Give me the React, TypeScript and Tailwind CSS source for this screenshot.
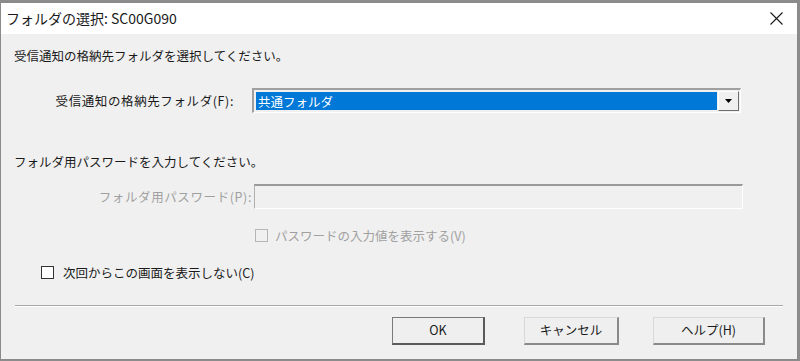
import React from "react";

const font = {
  fontFamily: '"Noto Sans CJK JP", "Noto Sans", sans-serif',
};

function Checkbox({ disabled }: { disabled?: boolean }) {
  return (
    <span
      className={
        "inline-block w-[13px] h-[13px] border " +
        (disabled
          ? "border-[#b5b5b5] bg-[#f0f0f0]"
          : "border-[#333333] bg-white")
      }
    />
  );
}

function DialogButton({
  label,
  width,
  isDefault,
}: {
  label: string;
  width: string;
  isDefault?: boolean;
}) {
  return (
    <div
      className={
        "h-[28px] flex items-center justify-center bg-[#efefef] text-[12.5px] text-[#1a1a1a] border-t border-l border-b-2 border-r-2 " +
        width +
        (isDefault
          ? " border-t-[#7a7a7a] border-l-[#7a7a7a] border-b-[#5a5a5a] border-r-[#5a5a5a]"
          : " border-t-[#d8d8d8] border-l-[#d8d8d8] border-b-[#8a8a8a] border-r-[#8a8a8a]")
      }
    >
      {label}
    </div>
  );
}

export default function App() {
  return (
    <div className="w-[800px] h-[361px] bg-[#8c8c8c] overflow-hidden" style={font}>
      <div className="mt-[2px] w-[798px] h-[358px] border border-[#8a8a8a] flex flex-col bg-[#f0f0f0]">
        {/* Title bar */}
        <div className="h-[31px] bg-white flex items-center justify-between pl-[5px] pr-[14px] shrink-0">
          <span className="text-[14px] text-[#1a1a1a]">
            フォルダの選択: SC00G090
          </span>
          <svg width="13" height="13" viewBox="0 0 13 13">
            <path d="M0.5 0.5 L12.5 12.5 M12.5 0.5 L0.5 12.5" stroke="#1a1a1a" strokeWidth="1.1" />
          </svg>
        </div>

        {/* Body */}
        <div className="flex-1 flex flex-col text-[12.5px] text-[#1a1a1a]">
          <div className="pl-[13px] pt-[13px] leading-[17px]">
            受信通知の格納先フォルダを選択してください。
          </div>

          {/* Folder combo */}
          <div className="flex items-center mt-[24px]">
            <div className="w-[233px] text-right leading-[17px] tracking-[0.6px]">受信通知の格納先フォルダ(F):</div>
            <div className="ml-[18px] w-[489px] h-[25px] flex border-t-2 border-l-2 border-t-[#a0a0a0] border-l-[#a0a0a0] border-b border-r border-b-white border-r-white p-[1px]">
              <div className="flex-1 bg-[#0078d7] text-white leading-[19px] pl-[2px] mt-[1px] mb-[1px] ml-[1px]">
                共通フォルダ
              </div>
              <div className="w-[21px] h-[20px] ml-[1px] bg-[#f0f0f0] border-t border-l border-t-white border-l-white border-b border-r border-b-[#6e6e6e] border-r-[#6e6e6e] flex items-center justify-center">
                <svg width="7" height="4" viewBox="0 0 7 4">
                  <path d="M0 0 H7 L3.5 4 Z" fill="#000" />
                </svg>
              </div>
            </div>
          </div>

          <div className="pl-[13px] mt-[40px] leading-[17px]">
            フォルダ用パスワードを入力してください。
          </div>

          {/* Password */}
          <div className="flex items-center mt-[14px]">
            <div className="w-[251px] text-right text-[#a0a0a0] leading-[17px] tracking-[0.6px]">フォルダ用パスワード(P):</div>
            <div className="ml-[2px] w-[489px] h-[25px] bg-[#f0f0f0] border-t-2 border-l border-t-[#9a9a9a] border-l-[#b0b0b0] border-b border-r border-b-white border-r-white" />
          </div>

          {/* Show password */}
          <div className="flex items-center mt-[18px] pl-[254px]">
            <Checkbox disabled />
            <span className="ml-[7px] text-[#a0a0a0] leading-[17px]">パスワードの入力値を表示する(V)</span>
          </div>

          {/* Don't show again */}
          <div className="flex items-center mt-[20px] pl-[40px]">
            <Checkbox />
            <span className="ml-[9px] leading-[17px]">次回からこの画面を表示しない(C)</span>
          </div>

          {/* Separator */}
          <div className="mt-[24px] mx-[14px] h-[2px] border-t border-t-[#a8a8a8] border-b border-b-white" />

          {/* Buttons */}
          <div className="flex mt-[10px] pl-[391px]">
            <DialogButton label="OK" width="w-[93px]" isDefault />
            <div className="ml-[39px]">
              <DialogButton label="キャンセル" width="w-[95px]" />
            </div>
            <div className="ml-[34px]">
              <DialogButton label="ヘルプ(H)" width="w-[112px]" />
            </div>
          </div>
        </div>
      </div>
    </div>
  );
}
